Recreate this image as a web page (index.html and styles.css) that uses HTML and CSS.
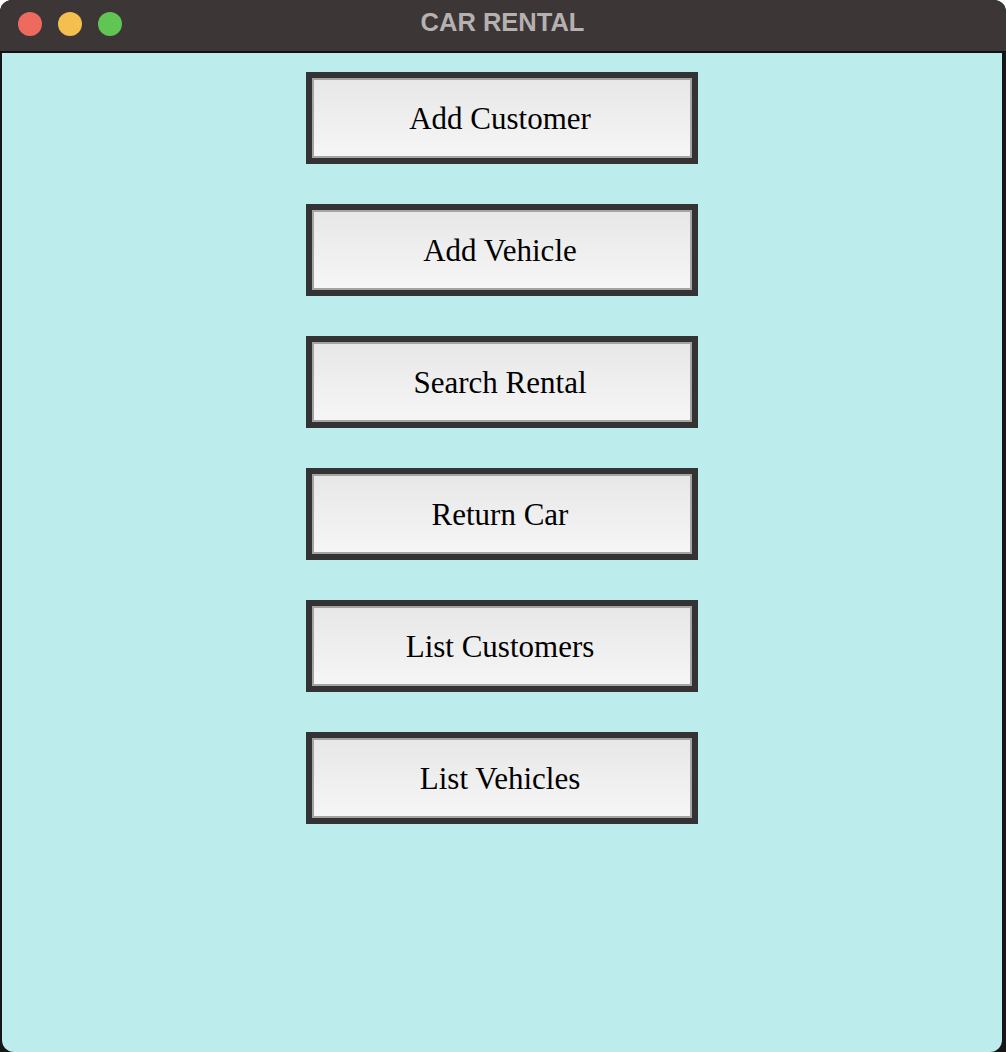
FILE: index.html
```html
<!DOCTYPE html>
<html>
<head>
<meta charset="utf-8">
<title>CAR RENTAL</title>
<link rel="stylesheet" href="styles.css">
</head>
<body>
<div class="window">
  <div class="titlebar">
    <div class="lights">
      <span class="light red"></span>
      <span class="light yellow"></span>
      <span class="light green"></span>
    </div>
    <div class="title">CAR RENTAL</div>
  </div>
  <div class="content">
    <button class="btn">Add Customer</button>
    <button class="btn">Add Vehicle</button>
    <button class="btn">Search Rental</button>
    <button class="btn">Return Car</button>
    <button class="btn">List Customers</button>
    <button class="btn">List Vehicles</button>
  </div>
</div>
</body>
</html>
```
FILE: styles.css
```css
html, body {
  margin: 0;
  padding: 0;
  background: #ffffff;
}
.window {
  width: 1006px;
  height: 1052px;
  background: #161616;
  border-radius: 12px 12px 0 0;
  display: flex;
  flex-direction: column;
  overflow: hidden;
}
.titlebar {
  position: relative;
  height: 51px;
  background: #3c3636;
  border-bottom: 2px solid #121212;
  display: flex;
  align-items: center;
  justify-content: center;
  flex: none;
}
.lights {
  position: absolute;
  left: 18px;
  top: 12px;
  display: flex;
  gap: 16px;
}
.light {
  width: 24px;
  height: 24px;
  border-radius: 50%;
  display: block;
}
.red { background: #ee6a5f; }
.yellow { background: #f5bf4f; }
.green { background: #61c554; }
.title {
  font-family: "Liberation Sans", Arial, sans-serif;
  font-weight: bold;
  font-size: 25.5px;
  color: #b6b1b1;
  margin-top: -6px;
  margin-left: -1px;
}
.content {
  flex: 1;
  margin: 0 4px 0 2px;
  background: #bdecec;
  border-radius: 0 0 12px 12px;
  display: flex;
  flex-direction: column;
  align-items: center;
  padding-top: 19px;
  gap: 40px;
}
.btn {
  width: 392px;
  height: 92px;
  box-sizing: border-box;
  border: 6px solid #333333;
  box-shadow: inset 0 0 0 2px #a4a4a4;
  background: linear-gradient(#e7e7e7, #f6f6f6);
  font-family: "Liberation Serif", "Times New Roman", serif;
  font-size: 31px;
  color: #000;
  padding: 2px 4px 0 0;
  margin: 0;
  display: flex;
  align-items: center;
  justify-content: center;
  cursor: default;
}
```
